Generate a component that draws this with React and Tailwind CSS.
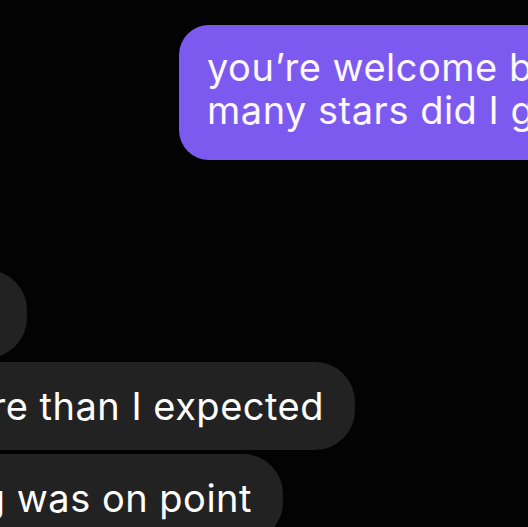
import React from 'react';

const font = { fontFamily: 'Inter, "Noto Sans", sans-serif' };

const GreyBubble = ({ children, width, shift }) => (
  <div
    className={`flex h-[88px] shrink-0 items-start justify-end overflow-hidden rounded-[40px] bg-[#222222] pt-[23px] pr-[31px] ${width} ${shift}`}
  >
    <span className="whitespace-nowrap text-[38px] leading-[43px] tracking-[0.5px] text-white">{children}</span>
  </div>
);

const App = () => {
  return (
    <div className="h-[527px] w-[528px] overflow-hidden bg-[#030303]" style={font}>
      {/* Sent message */}
      <div className="flex pt-[25px] pl-[179px]">
        <div className="w-[460px] shrink-0 rounded-[30px] bg-[#7c5af0] pt-[21px] pb-[28px] pl-[28px]">
          <p className="whitespace-nowrap text-[38px] leading-[43px] tracking-[0.5px] text-[#fdf7ff]">
            you’re welcome btw how
            <br />
            many stars did I get?
          </p>
        </div>
      </div>

      {/* Received messages */}
      <div className="flex flex-col items-start gap-[4px] pt-[110px]">
        <GreyBubble width="w-[327px]" shift="-ml-[300px]">
          that was good
        </GreyBubble>
        <GreyBubble width="w-[655px]" shift="-ml-[300px]">
          more than I expected
        </GreyBubble>
        <GreyBubble width="w-[583px]" shift="-ml-[300px]">
          everything was on point
        </GreyBubble>
      </div>
    </div>
  );
};

export default App;
